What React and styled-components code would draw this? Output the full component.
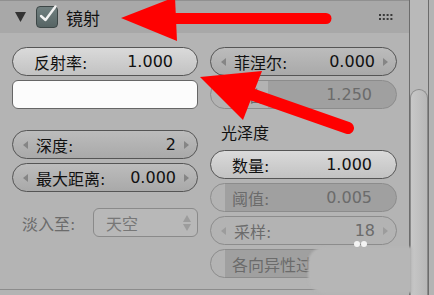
import React from 'react'
import styled, { createGlobalStyle } from 'styled-components';

const GlobalStyle = createGlobalStyle`
    body {
        margin: 0;
        background: #b4b4b4;
        font-family: "DejaVu Sans", "Noto Sans CJK SC", sans-serif;
    }
`;

const Page = styled.div`
    position: relative;
    width: 434px;
    height: 295px;
    display: flex;
    overflow: hidden;
    background: #b4b4b4;
`;

const Panel = styled.div`
    width: 409px;
    display: flex;
    flex-direction: column;
    border-right: 1px solid #6c6c6c;
`;

const Header = styled.div`
    height: 33px;
    display: flex;
    align-items: center;
    padding-left: 15px;
    padding-right: 16px;
    background: #a8a8a8;
    border-top: 1px solid #909090;
    box-sizing: border-box;
`;

const Check = styled.div`
    width: 20px;
    height: 20px;
    margin-left: 10px;
    border: 1px solid #3c4646;
    border-radius: 4px;
    background: linear-gradient(#718080, #566464);
    position: relative;
`;

const Title = styled.span`
    margin-left: 8px;
    font-size: 17px;
    color: #111;
    flex: 1;
`;

const Body = styled.div`
    flex: 1;
    display: flex;
    gap: 12px;
    padding: 14px 12px 0 12px;
    border-bottom: 1px solid #8c8c8c;
    margin-bottom: 5px;
`;

const Column = styled.div`
    width: ${p => p.$w}px;
    display: flex;
    flex-direction: column;
    gap: 4px;
`;

const Field = styled.div`
    height: 29px;
    box-sizing: border-box;
    border-radius: 15px;
    display: flex;
    align-items: center;
    padding: 0 ${p => p.$arrows ? 7 : 24}px 0 ${p => p.$arrows ? 9 : 21}px;
    font-size: 16px;
    margin-top: ${p => p.$top || 0}px;
    border: 1px solid ${p => p.$off ? '#8c8c8c' : '#555'};
    color: ${p => p.$off ? '#6b6b6b' : '#111'};
    background: ${p =>
        p.$kind === 'light' ? 'linear-gradient(#dadada, #c2c2c2)' :
        p.$kind === 'slider' ? `linear-gradient(to right, #b3b3b3 ${p.$fill}px, #a0a0a0 ${p.$fill}px)` :
        p.$off ? '#b3b3b3' : 'linear-gradient(#bcbcbc, #a9a9a9)'};
`;

const Label = styled.span`
    flex: 1;
    white-space: nowrap;
    overflow: hidden;
`;

const Value = styled.span`
    white-space: nowrap;
`;

const Arrow = styled.span`
    width: 0;
    height: 0;
    border-top: 4px solid transparent;
    border-bottom: 4px solid transparent;
    ${p => p.$dir === 'left' ? 'border-right' : 'border-left'}: 5px solid ${p => p.$off ? '#9c9c9c' : '#858585'};
    margin: ${p => p.$dir === 'left' ? '0 8px 0 1px' : '0 1px 0 8px'};
`;

const Swatch = styled.div`
    height: 29px;
    box-sizing: border-box;
    border: 1px solid #666;
    border-radius: 6px;
    background: #fcfcfc;
`;

const Heading = styled.div`
    height: 29px;
    display: flex;
    align-items: center;
    padding-left: 11px;
    font-size: 16px;
    color: #111;
    margin-top: 4px;
`;

const FadeRow = styled.div`
    display: flex;
    align-items: center;
    margin-top: 12px;
    font-size: 16px;
    color: #6b6b6b;
`;

const FadeLabel = styled.span`
    width: 81px;
    padding-left: 10px;
    box-sizing: border-box;
`;

const Select = styled.div`
    flex: 1;
    height: 29px;
    box-sizing: border-box;
    border: 1px solid #8a8a8a;
    border-radius: 6px;
    background: #b8b8b8;
    display: flex;
    align-items: center;
    padding: 0 6px 0 12px;
    color: #777;
`;

const Spin = styled.div`
    display: flex;
    flex-direction: column;
    gap: 2px;
    span {
        width: 0;
        height: 0;
        border-left: 4px solid transparent;
        border-right: 4px solid transparent;
    }
    span:first-child { border-bottom: 7px solid #9c9c9c; }
    span:last-child { border-top: 7px solid #9c9c9c; }
`;

const ScrollTrack = styled.div`
    width: 18px;
    border-right: 1px solid #6c6c6c;
    background: #b9b9b9;
    display: flex;
    flex-direction: column;
`;

const Thumb = styled.div`
    margin-top: 89px;
    flex: 1;
    border: 1px solid #8a8a8a;
    border-bottom: none;
    border-radius: 9px 9px 0 0;
    background: linear-gradient(to right, #c8c8c8, #b8b8b8);
`;

const Smudge = styled.div`
    position: absolute;
    left: 308px;
    top: 247px;
    width: 104px;
    height: 46px;
    border-radius: 16px 0 0 16px;
    background: #b6b6b6;
    filter: blur(1px);
`;

const Dot = styled.div`
    position: absolute;
    top: 241px;
    left: ${p => p.$x}px;
    width: 6px;
    height: 6px;
    border-radius: 50%;
    background: #f4f4f4;
`;

const Overlay = styled.svg`
    position: absolute;
    left: 0;
    top: 0;
    pointer-events: none;
`;

const NumField = ({ label, value, off }) => (
    <Field $arrows $off={off}>
        <Arrow $dir="left" $off={off} />
        <Label>{label}</Label>
        <Value>{value}</Value>
        <Arrow $dir="right" $off={off} />
    </Field>
);

const App = () => {
  return (
    <Page>
        <GlobalStyle />
        <Panel>
            <Header>
                <svg width="11" height="10" viewBox="0 0 11 10">
                    <path d="M0 0 L11 0 L5.5 10 Z" fill="#333" />
                </svg>
                <Check>
                    <svg width="20" height="20" viewBox="0 0 20 20" style={{ position: 'absolute', left: 0, top: 0, overflow: 'visible' }}>
                        <path d="M4 9 L8.5 13 L18.5 -0.5" fill="none" stroke="#f2f2f2" strokeWidth="2.4" strokeLinecap="round" strokeLinejoin="round" />
                    </svg>
                </Check>
                <Title>镜射</Title>
                <svg width="14" height="7" viewBox="0 0 14 7">
                    {[0, 1, 2, 3].map(c => [0, 1].map(r => (
                        <rect key={`${c}${r}`} x={c * 3.8} y={r * 4} width="2" height="2" fill="#3a3a3a" />
                    )))}
                </svg>
            </Header>
            <Body>
                <Column $w={186}>
                    <Field $kind="light">
                        <Label>反射率:</Label>
                        <Value>1.000</Value>
                    </Field>
                    <Swatch />
                    <Field $arrows $top={17}>
                        <Arrow $dir="left" />
                        <Label>深度:</Label>
                        <Value>2</Value>
                        <Arrow $dir="right" />
                    </Field>
                    <NumField label="最大距离:" value="0.000" />
                    <FadeRow>
                        <FadeLabel>淡入至:</FadeLabel>
                        <Select>
                            <Label>天空</Label>
                            <Spin><span /><span /></Spin>
                        </Select>
                    </FadeRow>
                </Column>
                <Column $w={187}>
                    <NumField label="菲涅尔:" value="0.000" />
                    <Field $kind="slider" $fill={57} $off>
                        <Label>混合:</Label>
                        <Value>1.250</Value>
                    </Field>
                    <Heading>光泽度</Heading>
                    <Field $kind="light">
                        <Label>数量:</Label>
                        <Value>1.000</Value>
                    </Field>
                    <Field $kind="slider" $fill={14} $off>
                        <Label>阈值:</Label>
                        <Value>0.005</Value>
                    </Field>
                    <NumField label="采样:" value="18" off />
                    <Field $kind="slider" $fill={14} $off>
                        <Label>各向异性过滤:</Label>
                        <Value>16</Value>
                    </Field>
                </Column>
            </Body>
        </Panel>
        <ScrollTrack>
            <Thumb />
        </ScrollTrack>
        <Smudge />
        <Dot $x={354} />
        <Dot $x={361} />
        <Overlay width="434" height="295" viewBox="0 0 434 295">
            <line x1="170" y1="18.5" x2="326" y2="18.5" stroke="#ff0000" strokeWidth="11" strokeLinecap="round" />
            <polygon points="121,18 175,-3 177,41" fill="#ff0000" />
            <line x1="248" y1="93" x2="348" y2="128" stroke="#ff0000" strokeWidth="12" strokeLinecap="round" />
            <polygon points="200,77 262,71 243,120" fill="#ff0000" />
        </Overlay>
    </Page>
  )
}

export default App
